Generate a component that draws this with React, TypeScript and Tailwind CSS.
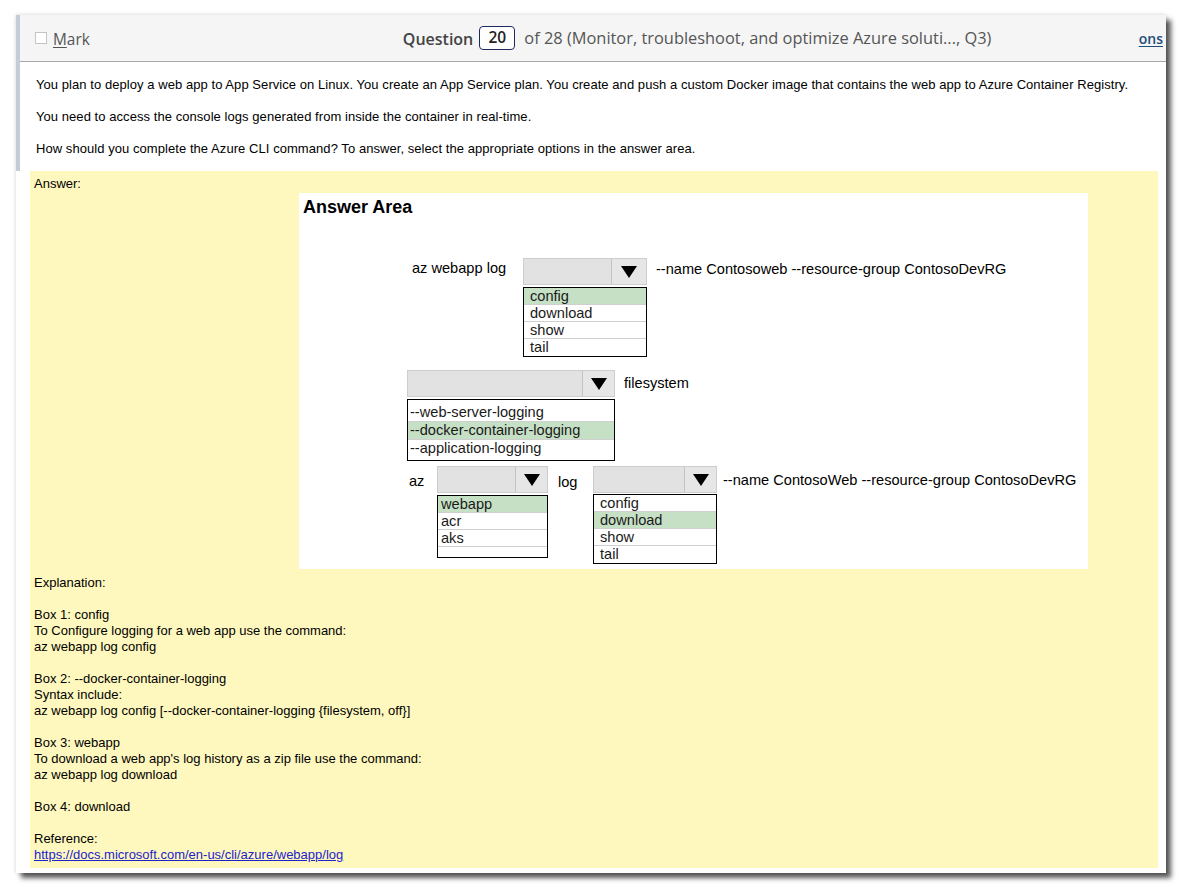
import React from "react";

const arial = { fontFamily: '"Liberation Sans", Arial, sans-serif' };

function Triangle() {
  return (
    <svg width="18" height="14" viewBox="0 0 18 14">
      <polygon points="1,1 17,1 9,13" fill="#000" />
    </svg>
  );
}

function Closed({ width, arrow }: { width: string; arrow: string }) {
  return (
    <div className={`h-[27px] flex bg-[#e2e2e2] border border-[#cdcdcd] ${width}`}>
      <div className="flex-1" />
      <div className={`h-full flex items-center justify-center border-l border-[#c4c4c4] bg-[#e6e6e6] ${arrow}`}>
        <Triangle />
      </div>
    </div>
  );
}

function List({
  items,
  selected,
  pad,
  extra,
  heights,
}: {
  items: string[];
  selected: number;
  pad: string;
  extra?: boolean;
  heights?: string[];
}) {
  return (
    <div className="border border-black bg-white">
      {items.map((it, i) => (
        <div
          key={it}
          className={`text-[14.6px] leading-[17px] text-[#1a1a1a] ${heights ? heights[i] : "h-[17px]"} ${pad} ${
            i === selected ? "bg-[#c6e0c6]" : "bg-white"
          } ${i < items.length - 1 || extra ? "border-b border-[#cfcfcf]" : ""}`}
        >
          <span className="block h-[17px] leading-[17px]">{it}</span>
        </div>
      ))}
      {extra && <div className="h-[10px]" />}
    </div>
  );
}

export default function App() {
  return (
    <div className="w-[1183px] h-[890px] bg-white pl-[16px] pt-[15px] overflow-hidden">
      <div className="w-[1150px] h-[858px] bg-white flex flex-col shadow-[5px_5px_5px_rgba(0,0,0,0.65),0_0_4px_rgba(0,0,0,0.18)]">
        <div className="border-l-4 border-[#c4cdd5]">
          <div
            className="h-[47px] bg-[#f5f5f5] border-b border-[#a8a8a8] flex items-center text-[#555]"
            style={{ fontFamily: '"Open Sans", "Noto Sans", sans-serif' }}
          >
            <div className="ml-[15px] w-[12px] h-[12px] border border-[#c4c4c4] bg-white" />
            <span className="ml-[6px] mt-[4px] text-[15.4px]">
              <span className="underline underline-offset-2">M</span>ark
            </span>
            <span className="ml-[313px] mt-[1px] text-[16px] font-semibold text-[#444]">Question</span>
            <span className="ml-[6px] h-[24px] w-[36px] border border-[#1f2a5c] rounded-[4px] bg-white flex items-center justify-center text-[15.5px] font-semibold text-[#222]">
              20
            </span>
            <span className="ml-[9px] mt-[1px] text-[16.4px] text-[#555] whitespace-nowrap">
              of 28 (Monitor, troubleshoot, and optimize Azure soluti..., Q3)
            </span>
            <span className="ml-auto mr-[3px] mt-[1px] text-[14px] font-semibold text-[#1e4d78] underline underline-offset-2 whitespace-nowrap">
              ons
            </span>
          </div>
          <div
            className="pl-[16px] pt-[15px] pb-[14px] text-[13px] leading-[16px] tracking-[0.06px] text-black"
            style={arial}
          >
            <p>
              You plan to deploy a web app to App Service on Linux. You create an App Service plan. You create and push a custom Docker image that contains the web app to Azure Container Registry.
            </p>
            <p className="mt-[16px]">You need to access the console logs generated from inside the container in real-time.</p>
            <p className="mt-[16px]">
              How should you complete the Azure CLI command? To answer, select the appropriate options in the answer area.
            </p>
          </div>
        </div>
        <div className="flex-1 pl-[14px] pr-[8px] pb-[5px] flex">
          <div className="flex-1 bg-[#fef8bf] pl-[4px] pt-[5px] text-[13px] leading-[16px] text-black" style={arial}>
            <div>Answer:</div>
            <div className="ml-[265px] mt-[1px] w-[789px] h-[376px] bg-white flex flex-col">
              <div className="pl-[4px] pt-[4px] text-[18px] leading-[20px] font-bold text-black">Answer Area</div>
              {/* Row 1 */}
              <div className="mt-[41px] ml-[113px] flex items-start text-[14.6px] text-black">
                <span className="w-[111px] mt-[2px] leading-[16px] whitespace-nowrap">az webapp log</span>
                <div className="w-[124px] flex flex-col">
                  <Closed width="w-[124px]" arrow="w-[35px]" />
                  <div className="mt-[2px]">
                    <List items={["config", "download", "show", "tail"]} selected={0} pad="pl-[6px]" />
                  </div>
                </div>
                <span className="ml-[9px] mt-[3px] leading-[16px] whitespace-nowrap">
                  --name Contosoweb --resource-group ContosoDevRG
                </span>
              </div>
              {/* Row 2 */}
              <div className="mt-[13px] ml-[108px] flex items-start text-[14.6px] text-black">
                <div className="w-[208px] flex flex-col">
                  <Closed width="w-[208px]" arrow="w-[32px]" />
                  <div className="mt-[2px]">
                    <List
                      items={["--web-server-logging", "--docker-container-logging", "--application-logging"]}
                      selected={1}
                      pad="pl-[2px]"
                      heights={["h-[22px] pt-[4px]", "h-[18px]", "h-[20px]"]}
                    />
                  </div>
                </div>
                <span className="ml-[9px] mt-[5px] leading-[16px]">filesystem</span>
              </div>
              {/* Row 3 */}
              <div className="mt-[5px] ml-[110px] flex items-start text-[14.6px] text-black">
                <span className="w-[28px] mt-[7px] leading-[16px]">az</span>
                <div className="w-[111px] flex flex-col">
                  <Closed width="w-[111px]" arrow="w-[32px]" />
                  <div className="mt-[2px]">
                    <List items={["webapp", "acr", "aks"]} selected={0} pad="pl-[3px]" extra />
                  </div>
                </div>
                <span className="ml-[10px] w-[35px] mt-[8px] leading-[16px]">log</span>
                <div className="w-[124px] flex flex-col">
                  <Closed width="w-[124px]" arrow="w-[32px]" />
                  <div className="mt-[1px]">
                    <List items={["config", "download", "show", "tail"]} selected={1} pad="pl-[6px]" />
                  </div>
                </div>
                <span className="ml-[6px] mt-[6px] leading-[16px] whitespace-nowrap">
                  --name ContosoWeb --resource-group ContosoDevRG
                </span>
              </div>
            </div>
            <div className="mt-[6px]">
              <div>Explanation:</div>
              <div className="h-[16px]" />
              <div>Box 1: config</div>
              <div>To Configure logging for a web app use the command:</div>
              <div>az webapp log config</div>
              <div className="h-[16px]" />
              <div>Box 2: --docker-container-logging</div>
              <div>Syntax include:</div>
              <div>az webapp log config [--docker-container-logging {"{filesystem, off}"}]</div>
              <div className="h-[16px]" />
              <div>Box 3: webapp</div>
              <div>To download a web app's log history as a zip file use the command:</div>
              <div>az webapp log download</div>
              <div className="h-[16px]" />
              <div>Box 4: download</div>
              <div className="h-[16px]" />
              <div>Reference:</div>
              <a className="text-[#2222cc] underline" href="#">
                https://docs.microsoft.com/en-us/cli/azure/webapp/log
              </a>
            </div>
          </div>
        </div>
      </div>
    </div>
  );
}
